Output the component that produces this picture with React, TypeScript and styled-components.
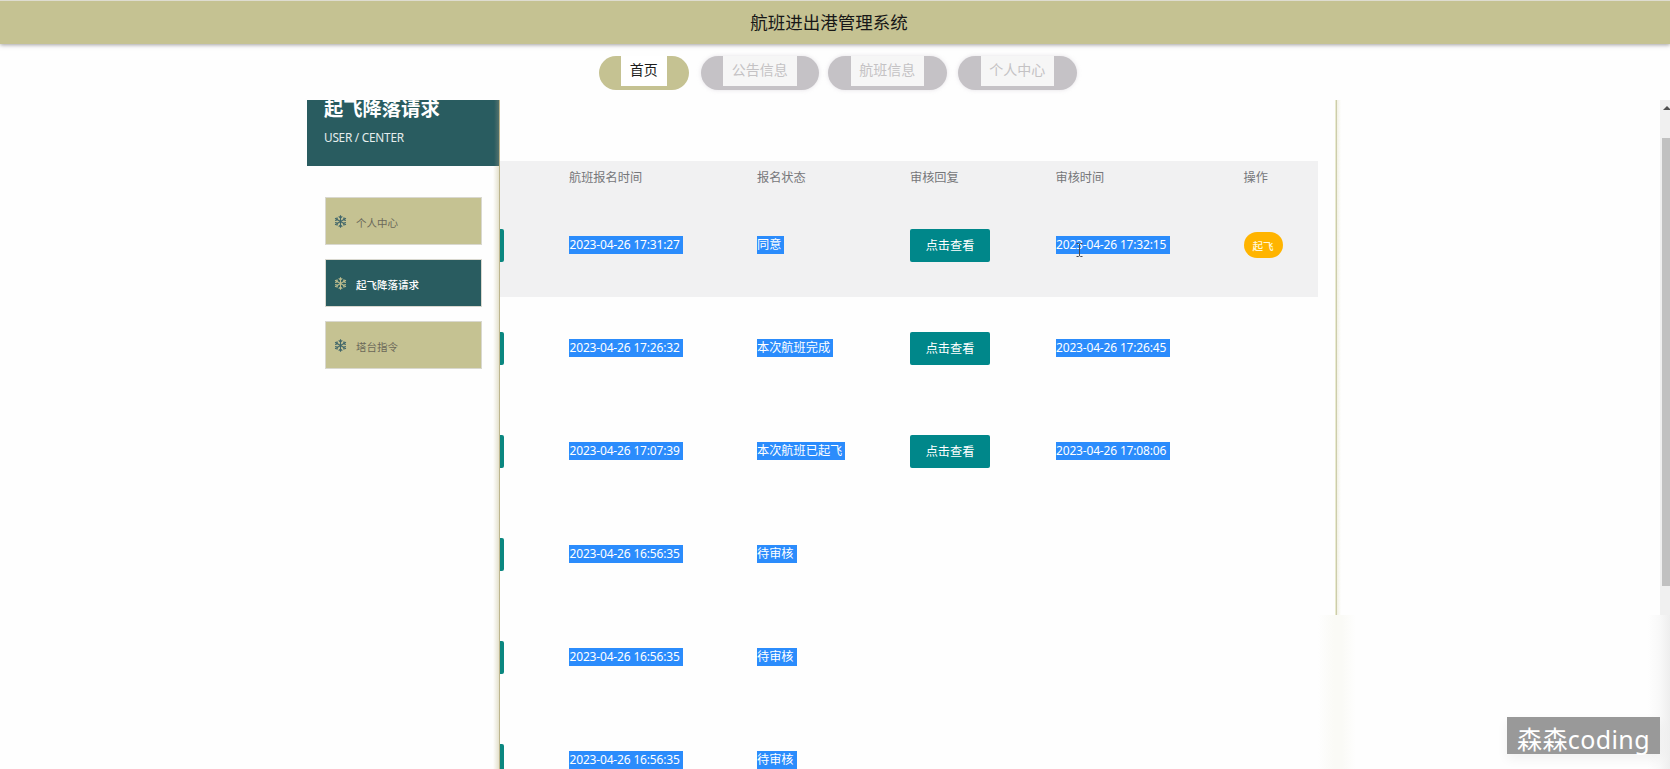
import React from "react";
import styled, { createGlobalStyle, css } from "styled-components";

const GlobalStyle = createGlobalStyle`
  * { box-sizing: border-box; }
  body {
    margin: 0;
    background: #fefefe;
    overflow: hidden;
    font-family: "Open Sans", "Noto Sans CJK SC", sans-serif;
  }
`;

const Page = styled.div`
  position: relative;
  display: flex;
  flex-direction: column;
  width: 1670px;
  height: 769px;
  overflow: hidden;
  white-space: nowrap;
`;

const Header = styled.header`
  flex: none;
  height: 44px;
  border-top: 1px solid #dedcd0;
  padding: 0 12px 2px 0;
  background: #c5c292;
  box-shadow: 0 1px 4px rgba(70, 65, 70, 0.5);
  display: flex;
  align-items: center;
  justify-content: center;
  font-size: 17.5px;
  line-height: 24px;
  color: #171717;
`;

const Nav = styled.nav`
  flex: none;
  height: 56px;
  padding: 12px 0 0 598.5px;
  display: flex;
  align-items: flex-start;
`;

const NavPill = styled.div<{ $active?: boolean; $gap: number }>`
  width: ${(p) => (p.$active ? 90.5 : 118.5)}px;
  height: 34px;
  margin-right: ${(p) => p.$gap}px;
  padding: 0 22.5px;
  border-radius: 17px;
  background: ${(p) => (p.$active ? "#c5c292" : "#c5c2c6")};
  box-shadow: ${(p) => (p.$active ? "none" : "0 0 4px rgba(190, 182, 195, 0.4)")};
  color: ${(p) => (p.$active ? "#1c1c1c" : "#c4c2c4")};
`;

const NavLabel = styled.span<{ $active?: boolean }>`
  display: block;
  height: 30px;
  line-height: 27px;
  background: ${(p) => (p.$active ? "#ffffff" : "#f6f6f6")};
  text-align: center;
  font-size: 14px;
`;

const Main = styled.main`
  flex: 1;
  min-height: 0;
  display: flex;
  overflow: hidden;
`;

const Sidebar = styled.aside`
  flex: none;
  width: 193px;
  margin-left: 307px;
  border-right: 1px solid #bdb58d;
  background: linear-gradient(to left, rgba(197, 190, 146, 0.45), rgba(197, 190, 146, 0) 6px);
`;

const SideHead = styled.div`
  height: 66px;
  padding-left: 17px;
  overflow: hidden;
  color: #fff;
  background: linear-gradient(to left, #52716d, #295c60 5px);
`;

const SideTitle = styled.h2`
  margin: -5px 0 0;
  font-size: 19.3px;
  line-height: 28px;
  font-weight: 700;
`;

const SideSub = styled.div`
  margin-top: 4px;
  font-family: "Noto Sans", sans-serif;
  font-size: 11.8px;
  letter-spacing: -0.24px;
  line-height: 20px;
  color: #e5eeee;
`;

const Menu = styled.div`
  padding: 31px 0 0 17.5px;
  display: flex;
  flex-direction: column;
  gap: 14px;
`;

const MenuItem = styled.div<{ $active?: boolean }>`
  width: 157px;
  height: 48px;
  padding-left: 8.5px;
  border: 1px solid #d9d8cf;
  display: flex;
  align-items: center;
  gap: 9px;
  font-size: 10.5px;
  background: ${(p) => (p.$active ? "#295c60" : "#c5c292")};
  color: ${(p) => (p.$active ? "#fff" : "#6b6859")};
  font-weight: ${(p) => (p.$active ? 500 : 400)};
  svg { color: ${(p) => (p.$active ? "#bebd8e" : "#41666a")}; }
  span { padding-top: 2px; }
`;

const Content = styled.section`
  flex: none;
  width: 818px;
  padding-top: 61px;
`;

const columns = css`
  display: grid;
  grid-template-columns: 69px 188px 153px 145.5px 188px 74px;
  align-items: center;
`;

const TableHead = styled.div`
  ${columns}
  height: 32.5px;
  background: #f1f1f2;
  font-size: 12.2px;
  color: #76777a;
`;

const Row = styled.div<{ $hover?: boolean }>`
  ${columns}
  height: 103px;
  background: ${(p) => (p.$hover ? "#f1f1f2" : "transparent")};
`;

const ButtonEdge = styled.div`
  width: 3.5px;
  height: 33px;
  border-radius: 0 2px 2px 0;
  background: #0b8780;
`;

const Selected = styled.span<{ $latin?: boolean }>`
  display: block;
  width: fit-content;
  height: 18px;
  line-height: 18px;
  color: #fff;
  background: #2b8cfc;
  font-size: 12.2px;
  padding-right: 3px;
  ${(p) => p.$latin && css`
    width: 114px;
    padding-left: 0.5px;
    font-size: 12px;
    line-height: 17px;
    font-family: "Noto Sans", sans-serif;
    letter-spacing: -0.17px;
  `}
`;

const ViewButton = styled.button`
  display: block;
  width: 80px;
  height: 33px;
  padding: 0;
  border: 0;
  border-radius: 2px;
  background: #00878a;
  color: #fff;
  font: 400 12.2px "Open Sans", "Noto Sans CJK SC", sans-serif;
`;

const TakeoffButton = styled(ViewButton)`
  width: 39px;
  height: 26px;
  border-radius: 13px;
  background: #ffb400;
  color: #fff8dc;
  font-size: 10.6px;
  font-weight: 500;
`;

const RightEdge = styled.div`
  flex: none;
  width: 38px;
  display: flex;
  flex-direction: column;
`;

const EdgeLine = styled.div`
  height: 515px;
  margin-left: 17px;
  border-left: 1px solid #e9ebcf;
  background: linear-gradient(to right, #cdccab 1px, #f1f1e4 1px, #fefefe 5px);
`;

const EdgeHaze = styled.div`
  flex: 1;
  background: linear-gradient(to right, #fefefe, #fafaf6 42%, #fafaf6 62%, #fefefe);
`;

const Gutter = styled.div`
  flex: 1;
  display: flex;
  flex-direction: column;
  align-items: flex-end;
`;

const ScrollTrack = styled.div`
  width: 10px;
  height: 515px;
  padding-left: 2px;
  background: #f0f0f0;
`;

const ScrollArrow = styled.div`
  height: 38px;
  padding: 6px 0 0 1px;
  overflow: hidden;
  svg { display: block; }
`;

const ScrollThumb = styled.div`
  height: 448px;
  background: #c1c1c1;
`;

const GutterHaze = styled.div`
  flex: 1;
  width: 22px;
  background: linear-gradient(to right, #fefefe, #f9f9f9 50%, #eeeeee);
`;

const Watermark = styled.div`
  position: absolute;
  left: 1507px;
  top: 717px;
  width: 153px;
  height: 37px;
  padding-left: 10px;
  background: #999;
  box-shadow: 0 5px 12px rgba(0, 0, 0, 0.055);
  color: #fff;
  font-family: "Noto Sans", "Noto Sans CJK SC", sans-serif;
  font-size: 25px;
  font-weight: 400;
  line-height: 45px;
  letter-spacing: 0.4px;
`;

const CursorHost = styled.div`
  position: relative;
`;

const Cursor = styled.svg`
  position: absolute;
  left: 20px;
  top: 7px;
`;

const Snowflake = () => (
  <svg width="13" height="13" viewBox="0 0 13 13" fill="none" stroke="currentColor" strokeWidth="1.1">
    {[0, 60, 120, 180, 240, 300].map((a) => (
      <g key={a} transform={`rotate(${a} 6.5 6.5)`}>
        <path d="M6.5 6.5V.2M4.7 1.3l1.8 1.7 1.8-1.7" />
      </g>
    ))}
  </svg>
);

const IBeam = () => (
  <Cursor width="7" height="14" viewBox="0 0 7 14" fill="none" stroke="#4a4a50" strokeWidth="1">
    <path d="M.5.5h2l1 .8 1-.8h2M3.5 1v12M.5 13.5h2l1-.8 1 .8h2" />
  </Cursor>
);

const navItems = [
  { label: "首页", gap: 11.5, active: true },
  { label: "公告信息", gap: 9 },
  { label: "航班信息", gap: 11.5 },
  { label: "个人中心", gap: 0 },
];

const menuItems = ["个人中心", "起飞降落请求", "塔台指令"];

const rows = [
  { time: "2023-04-26 17:31:27", status: "同意", reviewed: "2023-04-26 17:32:15" },
  { time: "2023-04-26 17:26:32", status: "本次航班完成", reviewed: "2023-04-26 17:26:45" },
  { time: "2023-04-26 17:07:39", status: "本次航班已起飞", reviewed: "2023-04-26 17:08:06" },
  { time: "2023-04-26 16:56:35", status: "待审核" },
  { time: "2023-04-26 16:56:35", status: "待审核" },
  { time: "2023-04-26 16:56:35", status: "待审核" },
];

export default function App() {
  return (
    <Page>
      <GlobalStyle />
      <Header>航班进出港管理系统</Header>
      <Nav>
        {navItems.map((n) => (
          <NavPill key={n.label} $active={n.active} $gap={n.gap}>
            <NavLabel $active={n.active}>{n.label}</NavLabel>
          </NavPill>
        ))}
      </Nav>
      <Main>
        <Sidebar>
          <SideHead>
            <SideTitle>起飞降落请求</SideTitle>
            <SideSub>USER / CENTER</SideSub>
          </SideHead>
          <Menu>
            {menuItems.map((m, i) => (
              <MenuItem key={m} $active={i === 1}>
                <Snowflake />
                <span>{m}</span>
              </MenuItem>
            ))}
          </Menu>
        </Sidebar>
        <Content>
          <TableHead>
            <span />
            <span>航班报名时间</span>
            <span>报名状态</span>
            <span>审核回复</span>
            <span>审核时间</span>
            <span>操作</span>
          </TableHead>
          {rows.map((r, i) => (
            <Row key={i} $hover={i === 0}>
              <ButtonEdge />
              <div><Selected $latin>{r.time}</Selected></div>
              <div><Selected>{r.status}</Selected></div>
              <div>{r.reviewed && <ViewButton>点击查看</ViewButton>}</div>
              <CursorHost>
                {r.reviewed && <Selected $latin>{r.reviewed}</Selected>}
                {i === 0 && <IBeam />}
              </CursorHost>
              <div>{i === 0 && <TakeoffButton>起飞</TakeoffButton>}</div>
            </Row>
          ))}
        </Content>
        <RightEdge>
          <EdgeLine />
          <EdgeHaze />
        </RightEdge>
        <Gutter>
          <ScrollTrack>
            <ScrollArrow>
              <svg width="8" height="4" viewBox="0 0 8 4"><path d="M0 4L4 0l4 4z" fill="#505050" /></svg>
            </ScrollArrow>
            <ScrollThumb />
          </ScrollTrack>
          <GutterHaze />
        </Gutter>
      </Main>
      <Watermark>森森coding</Watermark>
    </Page>
  );
}
